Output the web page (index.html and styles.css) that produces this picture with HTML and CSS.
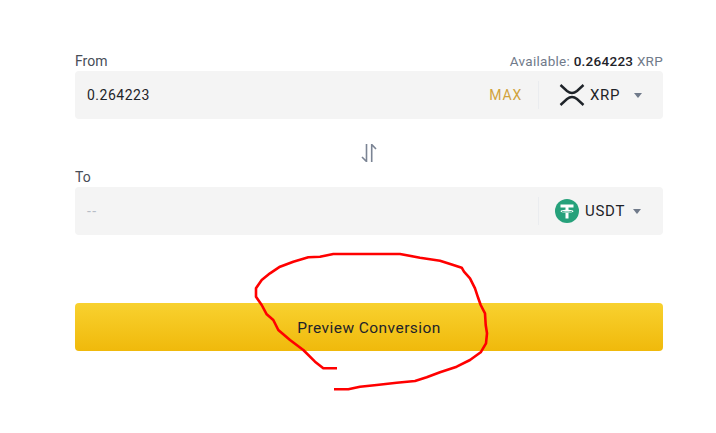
FILE: index.html
```html
<!DOCTYPE html>
<html lang="en">

<head>
    <meta charset="UTF-8">
    <meta name="viewport" content="width=device-width, initial-scale=1.0">
    <title>Convert</title>
    <link rel="stylesheet" href="styles.css">
</head>

<body>

    <form class="convert">
        <div class="label-row">
            <span class="label">From</span>
            <span class="available">Available: <b>0.264223</b> XRP</span>
        </div>
        <div class="field">
            <span class="amount">0.264223</span>
            <span class="max">MAX</span>
            <span class="divider"></span>
            <div class="coin coin-xrp">
                <svg class="xrp-icon" viewBox="0 0 26 22" width="26" height="22">
                    <path d="M1.500 1 8 7Q13 11 18 7L24.500 1" fill="none" stroke="#1e2329" stroke-width="2.400" />
                    <path d="M1.500 21 8 15Q13 11 18 15L24.500 21" fill="none" stroke="#1e2329" stroke-width="2.400" />
                </svg>
                <span class="coin-name">XRP</span>
                <span class="caret"></span>
            </div>
        </div>

        <div class="swap">
            <svg viewBox="0 0 16 18" width="16" height="18">
                <path d="M5.500 0v17.500L1 13M10.700 18V.5L15 5" fill="none" stroke="#7b8494" stroke-width="1.600" />
            </svg>
        </div>

        <div class="label-row">
            <span class="label">To</span>
        </div>
        <div class="field">
            <span class="amount placeholder">--</span>
            <span class="divider"></span>
            <div class="coin coin-usdt">
                <svg viewBox="0 0 24 24" width="24" height="24">
                    <circle cx="12" cy="12" r="12" fill="#26a17b" />
                    <path d="M5.500 5.500h13v3h-5v2.200c2.900.2 5 .8 5 1.500s-2.100 1.300-5 1.500v5.800h-3v-5.800c-2.900-.2-5-.8-5-1.500s2.100-1.300 5-1.500V8.500h-5z" fill="#fff" />
                    <path d="M7 12.200c1 .5 3 .8 5 .8s4-.3 5-.8" fill="none" stroke="#26a17b" stroke-width=".9" />
                </svg>
                <span class="coin-name">USDT</span>
                <span class="caret"></span>
            </div>
        </div>

        <button type="button" class="preview">Preview Conversion</button>
    </form>

    <!-- scribble on top of the screenshot -->
    <svg class="scribble" viewBox="0 0 716 433" width="716" height="433">
        <path d="M337 368.300 323.300 368.300 315 361.700 303.300 350 290 340 278.300 330 273.300 320 266.700 314.300 261.700 305 256 296.700 256 288.300 261.700 280 270 273.300 280 266.700 293.300 261.700 308.300 257.300 320 256.700 333.300 254 400 254 420 257.700 440 260.700 453.300 265 461.700 267.700 464 271.700 470 278.300 475 288.300 478.300 298.300 480.700 305 485 313.300 485.700 325 487 333.300 486 343.300 480.700 352.300 470 360 456.700 366.700 440 372.300 426.700 377.300 415 381 396.700 382.700 376.700 385 360 386.700 348.300 389.300 334 389.300" />
    </svg>

</body>

</html>
```

FILE: styles.css
```css
body {
    margin: 0;
    background-color: white;
    font-family: Roboto, "Liberation Sans", sans-serif;
    color: #1e2329;
    overflow: hidden;
}

.convert {
    width: 588px;
    margin-left: 75px;
    padding-top: 53px;
}

.label-row {
    height: 18px;
    box-sizing: border-box;
    padding-bottom: 2px;
    display: flex;
    justify-content: space-between;
    align-items: center;
    font-size: 14px;
}

.label {
    color: #474d57;
}

.available {
    font-size: 13.5px;
    color: #707a8a;
    letter-spacing: 0.27px;
}

.available b {
    font-weight: 500;
    color: #1e2329;
}

.field {
    height: 48px;
    background: #f4f4f4;
    border-radius: 4px;
    display: flex;
    align-items: center;
    padding-left: 12px;
}

.amount {
    flex: 1;
    font-size: 14px;
    letter-spacing: 0.5px;
}

.placeholder {
    color: #b7bdc6;
    letter-spacing: 1.5px;
}

.max {
    font-size: 14px;
    letter-spacing: 0.8px;
    color: #d0a23c;
    margin-right: 16px;
}

.divider {
    width: 1px;
    height: 28px;
    background: #eaecef;
}

.coin {
    display: flex;
    align-items: center;
    width: 124px;
    box-sizing: border-box;
}

.coin-xrp {
    padding-left: 20px;
}

.coin-usdt {
    padding-left: 16px;
}

.coin-name {
    font-size: 15px;
    letter-spacing: 0.7px;
    margin-left: 6px;
}

.coin-xrp .coin-name {
    margin-left: 5px;
}

.caret {
    width: 0;
    height: 0;
    margin-left: 8px;
    border-left: 4.5px solid transparent;
    border-right: 4.5px solid transparent;
    border-top: 5px solid #707a8a;
}

.coin-xrp .caret {
    margin-left: 14px;
}

.swap {
    height: 50px;
    box-sizing: border-box;
    padding-top: 25px;
    display: flex;
    align-items: flex-start;
    justify-content: center;
}

.preview {
    display: block;
    width: 100%;
    height: 48px;
    margin-top: 68px;
    padding-top: 2px;
    border: 0;
    border-radius: 4px;
    background: linear-gradient(#f8d12f, #f0b90b);
    color: #1e2329;
    font-family: inherit;
    font-size: 15.5px;
    font-weight: 400;
    letter-spacing: 0.45px;
}

.scribble {
    position: absolute;
    left: 0;
    top: 0;
    pointer-events: none;
}

.scribble path {
    fill: none;
    stroke: #f00;
    stroke-width: 2.6;
    stroke-linejoin: round;
}
```
